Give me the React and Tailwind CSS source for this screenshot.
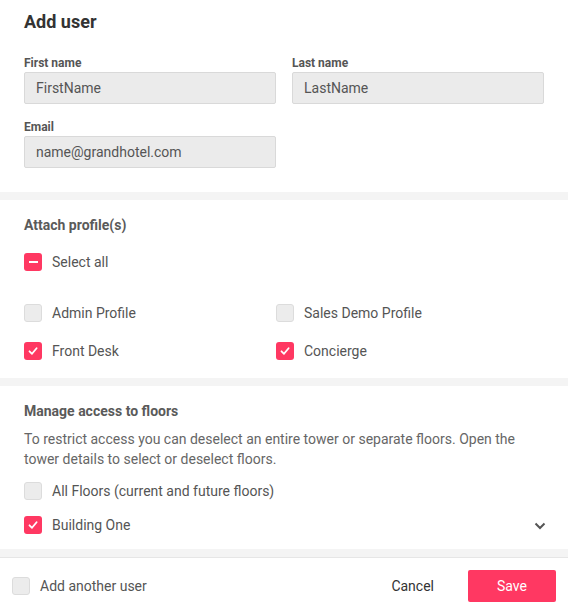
import React from "react";

function Box({ state }) {
  if (state === "checked") {
    return (
      <span className="flex h-[18px] w-[18px] shrink-0 items-center justify-center rounded-[3px] bg-[#ff3862]">
        <svg width="12" height="12" viewBox="0 0 12 12" fill="none">
          <path d="M2.5 6.3 L5 8.8 L9.6 3.2" stroke="white" strokeWidth="1.8" strokeLinecap="round" strokeLinejoin="round" />
        </svg>
      </span>
    );
  }
  if (state === "mixed") {
    return (
      <span className="flex h-[18px] w-[18px] shrink-0 items-center justify-center rounded-[3px] bg-[#ff3862]">
        <span className="h-[2px] w-[9px] bg-white" />
      </span>
    );
  }
  return <span className="h-[18px] w-[18px] shrink-0 rounded-[3px] border border-[#dcdcdc] bg-[#ececec]" />;
}

function Check({ state, label }) {
  return (
    <label className="flex h-[18px] items-center gap-[10px] text-[14px] text-[#555]">
      <Box state={state} />
      <span>{label}</span>
    </label>
  );
}

function Field({ label, value }) {
  return (
    <div className="flex flex-col">
      <div className="mb-[2px] h-[14px] text-[12px] font-bold leading-[14px] text-[#555]">{label}</div>
      <div className="flex h-[32px] items-center rounded-[2px] border border-[#d9d9d9] bg-[#ebebeb] pl-[11px] text-[14px] text-[#555]">
        {value}
      </div>
    </div>
  );
}

export default function App() {
  return (
    <div className="flex h-[615px] w-[568px] flex-col bg-white font-['Roboto',sans-serif]">
      <div className="px-6 pb-6 pt-[10px]">
        <h1 className="h-[24px] text-[18px] font-bold leading-[24px] text-[#333]">Add user</h1>
        <div className="mt-[22px] grid grid-cols-2 gap-x-4 gap-y-4">
          <Field label="First name" value="FirstName" />
          <Field label="Last name" value="LastName" />
          <Field label="Email" value="name@grandhotel.com" />
        </div>
      </div>
      <div className="h-[8px] bg-[#f4f4f4]" />
      <div className="px-6 pb-[18px] pt-4">
        <div className="h-[18px] text-[14px] font-bold leading-[18px] text-[#5a5a5a]">Attach profile(s)</div>
        <div className="mt-[19px]">
          <Check state="mixed" label="Select all" />
        </div>
        <div className="mt-[33px] grid grid-cols-[252px_1fr] gap-y-[20px]">
          <Check state="" label="Admin Profile" />
          <Check state="" label="Sales Demo Profile" />
          <Check state="checked" label="Front Desk" />
          <Check state="checked" label="Concierge" />
        </div>
      </div>
      <div className="h-[8px] bg-[#f4f4f4]" />
      <div className="px-6 pb-[15px] pt-4">
        <div className="h-[18px] text-[14px] font-bold leading-[18px] text-[#5a5a5a]">Manage access to floors</div>
        <p className="mt-[9px] text-[14px] leading-[20px] text-[#666]">
          To restrict access you can deselect an entire tower or separate floors. Open the tower details to select or deselect floors.
        </p>
        <div className="mt-[13px]">
          <Check state="" label="All Floors (current and future floors)" />
        </div>
        <div className="mt-[16px] flex items-center justify-between">
          <Check state="checked" label="Building One" />
          <svg width="12" height="8" viewBox="0 0 12 8" fill="none" className="mr-[-2px] mt-[2px]">
            <path d="M1.5 1.5 L6 6 L10.5 1.5" stroke="#555" strokeWidth="2" />
          </svg>
        </div>
      </div>
      <div className="h-[8px] bg-[#f4f4f4]" />
      <div className="flex flex-1 items-center justify-between border-t border-[#e6e6e6] pl-3 pr-3 pb-[1px]">
        <Check state="" label="Add another user" />
        <div className="flex items-center">
          <button className="mr-[34px] text-[14px] text-[#333]">Cancel</button>
          <button className="h-[32px] w-[88px] rounded-[2px] bg-[#ff3862] text-[14px] text-white">Save</button>
        </div>
      </div>
    </div>
  );
}
